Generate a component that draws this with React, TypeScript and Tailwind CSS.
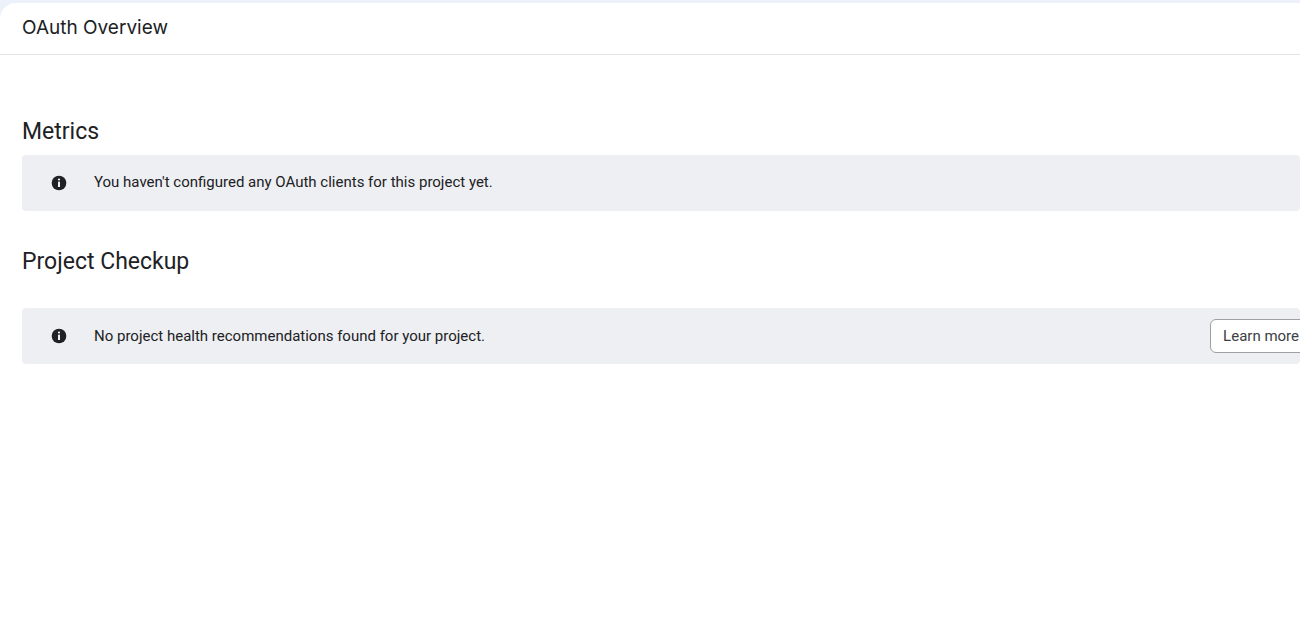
function InfoBanner({ text, action }: { text: string; action?: string }) {
    return (
        <div className="flex h-14 items-center rounded-sm bg-[#eeeff2] pl-[29px] pr-0">
            <svg className="h-4 w-4 shrink-0" viewBox="0 0 24 24">
                <circle cx="12" cy="12" r="11" fill="#202124" />
                <rect x="10.6" y="10" width="2.8" height="8" fill="#fff" />
                <circle cx="12" cy="6.8" r="1.6" fill="#fff" />
            </svg>
            <span className="ml-[27px] text-[15px] text-[#202124]">{text}</span>
            {action && (
                <button className="ml-auto -mr-[12px] h-[34px] whitespace-nowrap rounded-md border border-[#9aa0a6] bg-white px-[12px] text-[15px] text-[#3c4043]">{action}</button>
            )}
        </div>
    );
}

export default function App() {
    return (
        <div className="h-[640px] w-[1300px] overflow-hidden bg-[#edf1f9] pt-[3px]" style={{ fontFamily: "Roboto, 'Liberation Sans', sans-serif" }}>
            <div className="h-full w-[1340px] rounded-tl-2xl bg-white">
                <div className="flex h-[52px] items-center border-b border-[#e3e3e3] px-[22px] text-[19px] text-[#202124]" style={{ fontFamily: "Inter, Roboto, sans-serif" }}>OAuth Overview</div>
                <div className="pl-[22px] pr-[40px]">
                    <div className="mt-[60px] text-[23px] text-[#202124]">Metrics</div>
                    <div className="mt-[5px]"><InfoBanner text="You haven't configured any OAuth clients for this project yet." /></div>
                    <div className="mt-[34px] text-[23px] text-[#202124]">Project Checkup</div>
                    <div className="mt-[29px]"><InfoBanner text="No project health recommendations found for your project." action="Learn more" /></div>
                </div>
            </div>
        </div>
    );
}
